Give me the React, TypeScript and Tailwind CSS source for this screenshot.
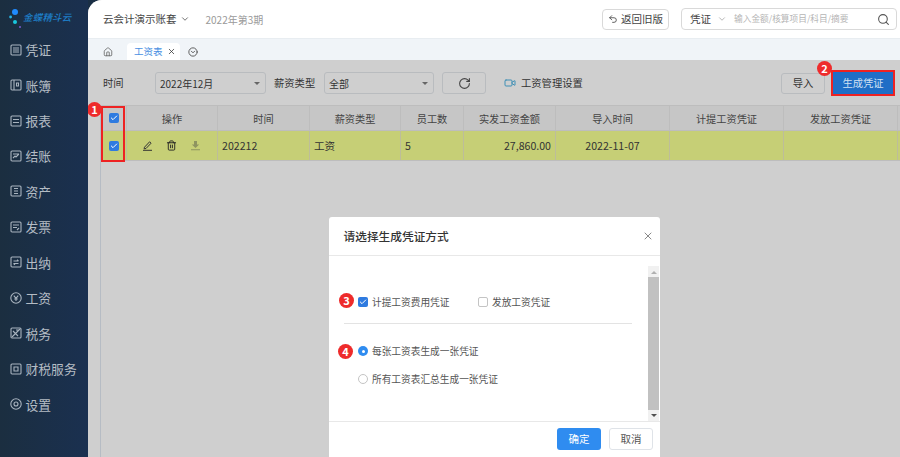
import React from "react";
import { ChevronDown, Search, Undo2, Home, X, RotateCw, Video, Trash2, Check, CircleChevronDown } from "lucide-react";

const cjk = "font-['Noto_Sans_CJK_SC','Noto_Sans',sans-serif]";

function NavIcon({ kind }: { kind: string }) {
  if (kind === "round") {
    return (
      <svg width="12" height="12" viewBox="0 0 12 12" fill="none" stroke="#a9b4bf" strokeWidth="1.1">
        <circle cx="6" cy="6" r="5.2" />
        <path d="M3.8 3.6 6 6.4l2.2-2.8M6 6.4V9M4.2 7h3.6" />
      </svg>
    );
  }
  if (kind === "gear") {
    return (
      <svg width="12" height="12" viewBox="0 0 12 12" fill="none" stroke="#a9b4bf" strokeWidth="1.1">
        <circle cx="6" cy="6" r="5.2" />
        <circle cx="6" cy="6" r="2" />
      </svg>
    );
  }
  const inner: Record<string, string> = {
    lines: "M3 4h6M3 6h6M3 8h6",
    book: "M4 1v10M6.5 4h2v3h-2z",
    two: "M3 4.5h6M3 7.5h6",
    check: "M3 4h6M3 8l2-2 1 1 3-3",
    asset: "M4 3.5h4M4 6h4M4 8.5h4",
    bill: "M3 4h6M3 6.5h4M7 9l2-2",
    cash: "M3.5 5h5M8.5 5 7 3.8M3.5 7.5h5M3.5 7.5 5 8.7",
    tax: "M2 10 10 2M3 4l5 5M6 3h3",
    svc: "M4 4h4v4H4z",
  };
  return (
    <svg width="12" height="12" viewBox="0 0 12 12" fill="none" stroke="#a9b4bf" strokeWidth="1.1">
      <rect x="1" y="1" width="10" height="10" rx="1" />
      <path d={inner[kind]} />
    </svg>
  );
}

const navItems = [
  ["凭证", "lines"],
  ["账簿", "book"],
  ["报表", "two"],
  ["结账", "check"],
  ["资产", "asset"],
  ["发票", "bill"],
  ["出纳", "cash"],
  ["工资", "round"],
  ["税务", "tax"],
  ["财税服务", "svc"],
  ["设置", "gear"],
];

const columns = [
  { label: "操作", w: "w-[91px]" },
  { label: "时间", w: "w-[92px]" },
  { label: "薪资类型", w: "w-[91px]" },
  { label: "员工数", w: "w-[63px]" },
  { label: "实发工资金额", w: "w-[92px]" },
  { label: "导入时间", w: "w-[114px]" },
  { label: "计提工资凭证", w: "w-[114px]" },
  { label: "发放工资凭证", w: "w-[114px]" },
];

function Badge({ n, className }: { n: number; className: string }) {
  return (
    <span className={`absolute flex h-[15px] w-[15px] items-center justify-center rounded-full bg-[#ee2b2b] text-[11px] font-bold leading-none text-white ${className}`}>
      {n}
    </span>
  );
}

function TickBox({ className = "" }: { className?: string }) {
  return (
    <span className={`flex h-[10px] w-[10px] items-center justify-center rounded-[2px] bg-[#2f7be0] ${className}`}>
      <Check size={8} strokeWidth={3} color="white" />
    </span>
  );
}

function SelectBox({ value, className }: { value: string; className: string }) {
  return (
    <div className={`flex h-[22px] items-center justify-between rounded-[3px] border border-[#b9bcbf] px-[4px] text-[10px] text-[#333] ${className}`}>
      <span>{value}</span>
      <span className="mr-[1px] h-0 w-0 border-x-[3px] border-t-[3px] border-x-transparent border-t-[#666]" />
    </div>
  );
}

export default function App() {
  return (
    <div className={`flex h-[457px] w-[900px] overflow-hidden bg-[#1a2f45] ${cjk}`}>
      {/* sidebar */}
      <aside className="flex w-[88px] shrink-0 flex-col bg-gradient-to-r from-[#1b2e40] to-[#1a3050]">
        <div className="flex h-[32px] items-start pl-[9px] pt-[8px]">
          <svg width="14" height="22" viewBox="0 0 14 22" className="shrink-0">
            <circle cx="6" cy="4" r="3" fill="#1f8bff" />
            <circle cx="1.6" cy="9" r="1.4" fill="#25b7e8" />
            <circle cx="6" cy="14" r="2" fill="#18c8de" />
            <circle cx="11" cy="19" r="1" fill="#7a5bd0" />
          </svg>
          <span className="mt-[5px] text-[9.5px] font-medium italic leading-none tracking-[0.2px] text-[#1e7fc9]">金蝶精斗云</span>
        </div>
        <nav className="flex flex-col">
          {navItems.map(([label, icon]) => (
            <div key={label} className="flex h-[35.45px] items-center gap-[4px] pl-[9.5px] text-[12.8px] text-[#b4bcc4]">
              <NavIcon kind={icon} />
              <span>{label}</span>
            </div>
          ))}
        </nav>
      </aside>

      {/* main */}
      <main className="relative flex min-w-0 flex-1 flex-col overflow-hidden rounded-tl-[14px] bg-[#cfcfcf]">
        <header className="flex h-[38px] items-center bg-white pl-[15px] pr-[3px]">
          <span className="text-[10.5px] text-[#444]">云会计演示账套</span>
          <ChevronDown size={10} color="#555" className="ml-[3px]" />
          <span className="ml-[16px] text-[10px] text-[#9a9a9a]">2022年第3期</span>
          <button className="ml-auto flex h-[21px] w-[67px] items-center justify-center gap-[3px] rounded-[4px] border border-[#d9d9d9] text-[10.5px] text-[#444]">
            <Undo2 size={10} color="#444" />
            返回旧版
          </button>
          <div className="ml-[12px] flex h-[22px] w-[216px] items-center rounded-[4px] border border-[#d9d9d9] pl-[8px] pr-[6px]">
            <span className="text-[10.5px] text-[#444]">凭证</span>
            <ChevronDown size={10} color="#aaa" className="ml-[6px]" />
            <span className="ml-[7px] text-[8.7px] text-[#b5b5b5]">输入金额/核算项目/科目/摘要</span>
            <Search size={13} color="#555" className="ml-auto" />
          </div>
        </header>

        <div className="flex h-[22px] items-end border-t border-[#e8edf1] bg-[#f0f4f8] pl-[15px]">
          <Home size={10} color="#666" className="mb-[3px]" />
          <div className="ml-[14px] flex h-[17px] w-[53px] items-center rounded-t-[4px] bg-white pl-[7px] text-[9.5px] text-[#4a90e2]">
            工资表
            <X size={9} color="#333" strokeWidth={2} className="ml-[4px]" />
          </div>
          <CircleChevronDown size={10} color="#444" className="mb-[3px] ml-[8px]" />
        </div>

        {/* toolbar */}
        <div className="flex h-[45px] items-center pl-[15px] pr-[7px] pt-[1px] text-[10.3px] text-[#333]">
          <span className="w-[52px]">时间</span>
          <SelectBox value="2022年12月" className="w-[111px]" />
          <span className="ml-[8px] w-[50px]">薪资类型</span>
          <SelectBox value="全部" className="w-[110px]" />
          <button className="ml-[8px] flex h-[22px] w-[44px] items-center justify-center rounded-[3px] border border-[#b9bcbf]">
            <RotateCw size={13} color="#444" />
          </button>
          <Video size={12} color="#3f8fb5" className="ml-[18px]" />
          <span className="ml-[5px]">工资管理设置</span>
          <button className="ml-auto flex h-[21px] w-[44px] items-center justify-center rounded-[3px] border border-[#b9bcbf]">导入</button>
          <button className="relative ml-[8px] flex h-[22px] w-[60px] items-center justify-center bg-[#1f6ec6] text-[#cfe0f2] outline-2 outline-[#ee2222]">
            生成凭证
            <Badge n={2} className="-left-[16px] -top-[11px]" />
          </button>
        </div>

        {/* table */}
        <div className="relative ml-[12px] flex-1 border-l border-[#b6bcc4]">
          <div className="flex h-[26px] border-y border-[#bdbdbd] bg-[#c6c6c6] text-[10.2px] text-[#444]">
            <div className="flex w-[26px] items-center justify-center border-r border-[#bdbdbd]">
              <TickBox />
            </div>
            {columns.map((c) => (
              <div key={c.label} className={`flex items-center justify-center border-r border-[#bdbdbd] pt-[1px] ${c.w}`}>{c.label}</div>
            ))}
          </div>
          <div className="flex h-[30px] border-b border-[#bdbdbd] bg-[#c6cf76] text-[10.6px] text-[#333]">
            <div className="flex w-[26px] items-center justify-center border-r border-[#bdbd9a]">
              <TickBox />
            </div>
            <div className="flex w-[91px] items-center justify-center gap-[13px] border-r border-[#bdbd9a] pr-[2px]">
              <svg width="11" height="11" viewBox="0 0 11 11" fill="none" stroke="#333" strokeWidth="1">
                <path d="M2.5 7.2 7.6 1.8l1.5 1.4-5.1 5.3-1.9.3z" />
                <path d="M1 10.3h9" />
              </svg>
              <Trash2 size={11} color="#222" />
              <svg width="11" height="11" viewBox="0 0 11 11" fill="#8e9460">
                <path d="M4 1h3v3.4h2.2L5.5 8 1.8 4.4H4z" />
                <path d="M1 9.3h9v1H1z" />
              </svg>
            </div>
            <div className="flex w-[92px] items-center border-r border-[#bdbd9a] pl-[4px]">202212</div>
            <div className="flex w-[91px] items-center border-r border-[#bdbd9a] pl-[4px]">工资</div>
            <div className="flex w-[63px] items-center border-r border-[#bdbd9a] pl-[4px]">5</div>
            <div className="flex w-[92px] items-center justify-end border-r border-[#bdbd9a] pr-[4px]">27,860.00</div>
            <div className="flex w-[114px] items-center justify-center border-r border-[#bdbd9a]">2022-11-07</div>
            <div className="w-[114px] border-r border-[#bdbd9a]" />
            <div className="w-[114px] border-r border-[#bdbd9a]" />
          </div>
          {/* red highlight over the checkbox column */}
          <div className="absolute left-0 top-[1px] h-[56px] w-[24px] border-2 border-[#ee2222]" />
          <Badge n={1} className="-left-[14px] top-[-3px]" />
        </div>

        {/* dialog */}
        <div className="absolute left-[241px] top-[217px] flex h-[240px] w-[331px] flex-col rounded-t-[3px] bg-white">
          <div className="flex h-[39px] items-center justify-between border-b border-[#e8e8e8] pl-[14.5px] pr-[6px]">
            <span className="text-[11.7px] font-medium text-[#333]">请选择生成凭证方式</span>
            <X size={12} color="#888" />
          </div>
          <div className="flex min-h-0 flex-1">
            <div className="flex-1 pl-[15px] pr-[16px] text-[9.7px] text-[#555]">
              <div className="relative flex h-[68px] items-end border-b border-[#e3e3e3] pb-[13px]">
                <Badge n={3} className="-left-[5px] bottom-[15px]" />
                <TickBox className="mb-[3px] ml-[14px]" />
                <span className="ml-[4px] w-[106px]">计提工资费用凭证</span>
                <span className="mb-[3px] h-[10px] w-[10px] rounded-[2px] border border-[#c4c4c4]" />
                <span className="ml-[4px]">发放工资凭证</span>
              </div>
              <div className="relative flex items-center pl-[14px] pt-[20px]">
                <Badge n={4} className="-left-[6px] top-[20px]" />
                <span className="flex h-[10px] w-[10px] items-center justify-center rounded-full bg-[#2f8cf0]">
                  <span className="h-[3px] w-[3px] rounded-full bg-white" />
                </span>
                <span className="ml-[4px]">每张工资表生成一张凭证</span>
              </div>
              <div className="flex items-center pl-[14px] pt-[13px]">
                <span className="h-[10px] w-[10px] rounded-full border border-[#c4c4c4]" />
                <span className="ml-[4px]">所有工资表汇总生成一张凭证</span>
              </div>
            </div>
            <div className="mr-[1px] mt-[10px] flex w-[11px] flex-col items-center bg-[#f1f1f1]">
              <span className="mt-[5px] h-0 w-0 border-x-[3px] border-b-[3px] border-x-transparent border-b-[#b0b0b0]" />
              <div className="mt-[3px] w-full flex-1 bg-[#c1c1c1]" />
              <span className="my-[4px] h-0 w-0 border-x-[3px] border-t-[3px] border-x-transparent border-t-[#505050]" />
            </div>
          </div>
          <div className="flex h-[36px] items-center justify-end gap-[8px] border-t border-[#e8e8e8] pb-[1px] pr-[7px] text-[10.5px]">
            <button className="h-[22px] w-[44px] rounded-[3px] bg-[#2f8cf0] text-white">确定</button>
            <button className="h-[22px] w-[44px] rounded-[3px] border border-[#dfe3e8] text-[#555]">取消</button>
          </div>
        </div>
      </main>
    </div>
  );
}
